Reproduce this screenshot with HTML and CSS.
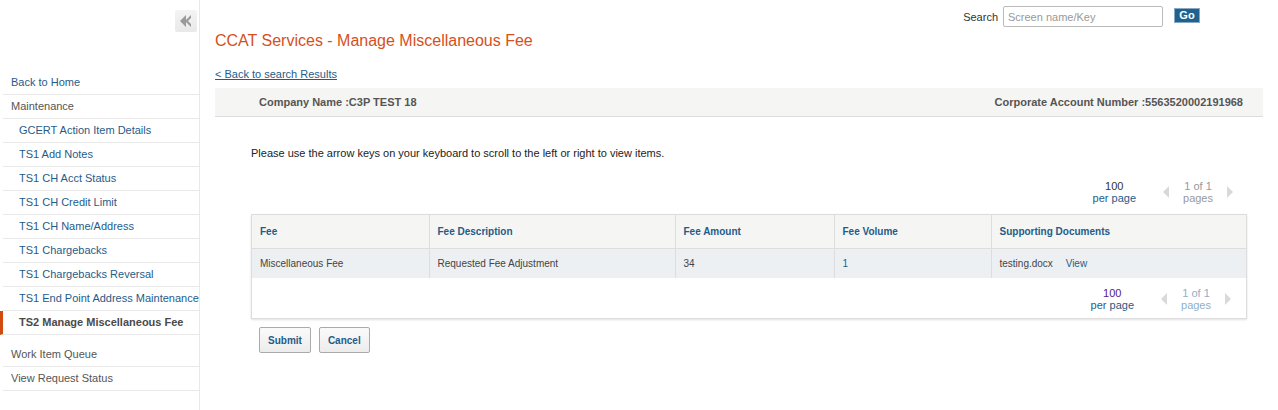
FILE: index.html
```html
<!DOCTYPE html>
<html>
<head>
<meta charset="utf-8">
<link rel="stylesheet" href="styles.css">
</head>
<body>
<div class="app">
  <aside class="sidebar">
    <div class="collapse-row">
      <button class="collapse-btn" aria-label="Collapse">
        <svg width="12" height="12" viewBox="0 0 12 12"><polygon points="0,6 6,0 6,12" fill="#9a9a9a"/><polygon points="5,6 11,0 11,12" fill="#9a9a9a"/><polygon points="8,6 12,2 12,10" fill="#f0f0f0"/></svg>
      </button>
    </div>
    <nav class="nav">
      <a class="nav-item top link">Back to Home</a>
      <div class="nav-item top">Maintenance</div>
      <a class="nav-item sub">GCERT Action Item Details</a>
      <a class="nav-item sub">TS1 Add Notes</a>
      <a class="nav-item sub">TS1 CH Acct Status</a>
      <a class="nav-item sub">TS1 CH Credit Limit</a>
      <a class="nav-item sub">TS1 CH Name/Address</a>
      <a class="nav-item sub">TS1 Chargebacks</a>
      <a class="nav-item sub">TS1 Chargebacks Reversal</a>
      <a class="nav-item sub">TS1 End Point Address Maintenance</a>
      <a class="nav-item sub active">TS2 Manage Miscellaneous Fee</a>
      <div class="nav-gap"></div>
      <a class="nav-item top">Work Item Queue</a>
      <a class="nav-item top">View Request Status</a>
    </nav>
  </aside>
  <main class="main">
    <div class="search-row">
      <label class="search-label">Search</label>
      <input class="search-input" type="text" placeholder="Screen name/Key">
      <button class="go-btn">Go</button>
    </div>
    <h1 class="title">CCAT Services - Manage Miscellaneous Fee</h1>
    <a class="back-link">&lt; Back to search Results</a>
    <div class="company-bar">
      <span>Company Name :C3P TEST 18</span>
      <span>Corporate Account Number :5563520002191968</span>
    </div>
    <div class="content">
      <p class="hint">Please use the arrow keys on your keyboard to scroll to the left or right to view items.</p>
      <div class="pager top-pager">
        <div class="per-page"><span class="num">100</span><span class="lnk">per page</span></div>
        <div class="pages">
          <span class="arrow left"></span>
          <div class="pg-text"><span>1 of 1</span><span>pages</span></div>
          <span class="arrow right"></span>
        </div>
      </div>
      <div class="table-wrap">
        <table class="grid">
          <colgroup>
            <col style="width:177px"><col style="width:246px"><col style="width:159px"><col style="width:157px"><col>
          </colgroup>
          <thead>
            <tr><th>Fee</th><th>Fee Description</th><th>Fee Amount</th><th>Fee Volume</th><th>Supporting Documents</th></tr>
          </thead>
          <tbody>
            <tr><td>Miscellaneous Fee</td><td>Requested Fee Adjustment</td><td>34</td><td class="blue">1</td><td>testing.docx <a class="view">View</a></td></tr>
          </tbody>
        </table>
        <div class="pager bottom-pager">
          <div class="per-page"><span class="num purple">100</span><span class="lnk">per page</span></div>
          <div class="pages">
            <span class="arrow left"></span>
            <div class="pg-text blue-t"><span>1 of 1</span><span>pages</span></div>
            <span class="arrow right"></span>
          </div>
        </div>
      </div>
      <div class="actions">
        <button class="btn">Submit</button>
        <button class="btn">Cancel</button>
      </div>
    </div>
  </main>
</div>
</body>
</html>
```

FILE: styles.css
```css
* { box-sizing: border-box; }
html, body { margin: 0; padding: 0; background: #fff; }
body { font-family: "Liberation Sans", Arial, sans-serif; color: #333; }
a { cursor: pointer; }

.app { display: flex; min-height: 410px; }

.sidebar {
  width: 200px;
  flex: 0 0 200px;
  border-right: 1px solid #e8e8e8;
}
.collapse-row { display: flex; justify-content: flex-end; padding: 10px 2px 0 0; height: 71px; }
.collapse-btn {
  width: 22px; height: 22px; padding: 0; margin: 0;
  border: none; border-radius: 2px;
  background: linear-gradient(#f4f4f4, #e9e9e9);
  display: flex; align-items: center; justify-content: center;
}

.nav { display: flex; flex-direction: column; }
.nav-item {
  display: block;
  height: 24px;
  line-height: 23px;
  font-size: 11px;
  border-bottom: 1px solid #e9e9e9;
  margin-left: 3px;
  white-space: nowrap;
  text-decoration: none;
}
.nav-item.top { padding-left: 8px; color: #555; }
.nav-item.top.link { color: #1f5c8a; }
.nav-item.sub { padding-left: 16px; color: #1f5c8a; }
.nav-item.sub.active {
  color: #4a4a4a; font-weight: bold;
  margin-left: 0;
  border-left: 3px solid #d24a0d;
  padding-left: 16px;
}
.nav-gap { height: 8px; }

.main { flex: 1; padding: 0 15px 0 15px; min-width: 0; }
.search-row { display: flex; justify-content: flex-end; align-items: center; height: 30px; padding: 3px 63px 0 0; }
.search-label { font-size: 11px; color: #333; margin-right: 5px; }
.search-input {
  width: 160px; height: 21px; border: 1px solid #bbb; border-radius: 2px;
  font-family: "Liberation Sans", Arial, sans-serif; font-size: 11px; padding: 0 4px; margin: 0 11px 0 0;
}
.search-input::placeholder { color: #999; }
.go-btn {
  width: 26px; height: 15px; padding: 0; margin-top: -3px;
  background: #1e6290; color: #fff; border: 1px solid #8aa9c0;
  font-family: "Liberation Sans", Arial, sans-serif; font-weight: bold; font-size: 11px; line-height: 12px;
}

.title {
  margin: 1px 0 0 0; font-weight: normal; font-size: 16px; color: #d5501c; line-height: 20px;
}
.back-link {
  display: inline-block; margin-top: 17px; font-size: 11px; color: #1f5c8a; text-decoration: underline; line-height: 13px;
}
.company-bar {
  margin-top: 6px;
  height: 29px;
  background: #f5f5f3;
  border-bottom: 1px solid #ddd;
  display: flex; justify-content: space-between; align-items: center;
  padding: 0 20px 0 44px;
  font-size: 11px; font-weight: bold; color: #555;
}

.content { padding: 0 16px 0 36px; }
.hint { margin: 29px 0 0 0; font-size: 11px; color: #222; line-height: 14px; }

.pager { display: flex; justify-content: flex-end; align-items: center; font-size: 11px; line-height: 12px; }
.top-pager { margin-top: 19px; padding-right: 14px; height: 26px; }
.bottom-pager { padding-right: 15px; height: 40px; padding-top: 1px; }
.per-page { display: flex; flex-direction: column; align-items: center; margin-right: 27px; }
.per-page .num { color: #333; }
.per-page .num.purple { color: #551a8b; }
.per-page .lnk { color: #1f5c8a; }
.pages { display: flex; align-items: center; }
.pg-text { display: flex; flex-direction: column; align-items: center; color: #999; margin: 0 14px; }
.pg-text.blue-t span { color: #8fb0c8; }
.arrow { width: 0; height: 0; border-top: 6px solid transparent; border-bottom: 6px solid transparent; }
.arrow.left { border-right: 6px solid #d9d9d9; }
.arrow.right { border-left: 6px solid #d9d9d9; }

.table-wrap {
  margin-top: 9px;
  border: 1px solid #ddd;
  box-shadow: 0 1px 2px rgba(0,0,0,0.12);
}
.grid { width: 100%; border-collapse: collapse; table-layout: fixed; font-size: 10px; }
.grid th {
  background: #f5f5f3; color: #1f5c8a; font-weight: bold; text-align: left;
  height: 33px; padding: 0 8px; border-right: 1px solid #ddd; border-bottom: 1px solid #ddd;
}
.grid td {
  background: #ecf0f3; color: #444; height: 30px; padding: 0 8px; border-right: 1px solid #ddd;
}
.grid th:last-child, .grid td:last-child { border-right: none; }
.grid td.blue { color: #1f5c8a; }
.view { color: #1f5c8a; margin-left: 10px; }

.actions { display: flex; gap: 8px; margin-top: 8px; padding-left: 8px; }
.btn {
  height: 26px; padding: 0 8px;
  background: linear-gradient(#fafafa, #ececec);
  border: 1px solid #aaa; border-radius: 2px;
  font-family: "Liberation Sans", Arial, sans-serif; font-size: 10px; font-weight: bold; color: #1f5c8a;
}
```
